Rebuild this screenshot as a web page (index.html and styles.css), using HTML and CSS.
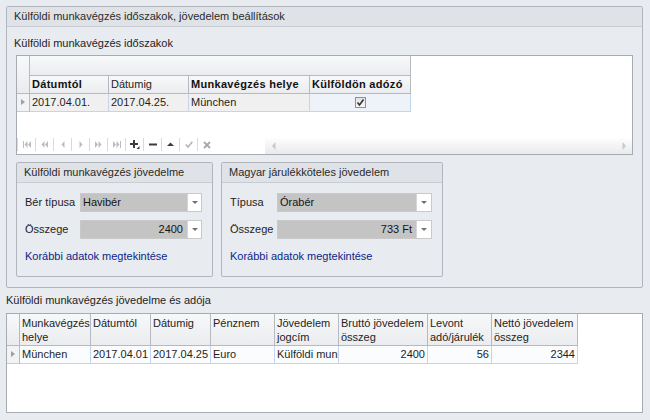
FILE: index.html
```html
<!DOCTYPE html>
<html>
<head>
<meta charset="utf-8">
<title>Külföldi munkavégzés</title>
<link rel="stylesheet" href="styles.css">
</head>
<body>
<div class="group main">
  <div class="ghead">Külföldi munkavégzés időszakok, jövedelem beállítások</div>
  <div class="mbody">
    <div class="caption">Külföldi munkavégzés időszakok</div>
    <div class="grid g1">
      <div class="t1">
        <div class="ind ind-head"></div>
        <div class="band"></div>
        <div class="h b">Dátumtól</div>
        <div class="h">Dátumig</div>
        <div class="h b">Munkavégzés helye</div>
        <div class="h b">Külföldön adózó</div>
        <div class="ind ind-row"><span class="tri"></span></div>
        <div class="d foc">2017.04.01.</div>
        <div class="d foc">2017.04.25.</div>
        <div class="d foc">München</div>
        <div class="d sel ctr"><span class="chk"><svg width="9" height="9" viewBox="0 0 9 9"><path d="M1.5 4.5 L3.5 7 L7.5 1.5" fill="none" stroke="#333" stroke-width="1.6"/></svg></span></div>
      </div>
      <div class="spacer"></div>
      <div class="bottombar">
        <div class="nav">
          <span class="nb"><svg width="8" height="7" viewBox="0 0 8 7"><rect x="0" y="0" width="1" height="7" fill="#b9bdc3"/><path d="M4.5 0 L1.5 3.5 L4.5 7Z M8 0 L5 3.5 L8 7Z" fill="#b9bdc3"/></svg></span>
          <span class="nb"><svg width="7" height="7" viewBox="0 0 7 7"><path d="M3.5 0 L0.5 3.5 L3.5 7Z M7 0 L4 3.5 L7 7Z" fill="#b9bdc3"/></svg></span>
          <span class="nb"><svg width="4" height="7" viewBox="0 0 4 7"><path d="M3.5 0 L0.5 3.5 L3.5 7Z" fill="#b9bdc3"/></svg></span>
          <span class="nb"><svg width="4" height="7" viewBox="0 0 4 7"><path d="M0.5 0 L3.5 3.5 L0.5 7Z" fill="#b9bdc3"/></svg></span>
          <span class="nb"><svg width="7" height="7" viewBox="0 0 7 7"><path d="M0 0 L3 3.5 L0 7Z M3.5 0 L6.5 3.5 L3.5 7Z" fill="#b9bdc3"/></svg></span>
          <span class="nb"><svg width="8" height="7" viewBox="0 0 8 7"><path d="M0 0 L3 3.5 L0 7Z M3.5 0 L6.5 3.5 L3.5 7Z" fill="#b9bdc3"/><rect x="7" y="0" width="1" height="7" fill="#b9bdc3"/></svg></span>
          <span class="nb"><svg width="10" height="9" viewBox="0 0 10 9"><path d="M3 0 H5 V3 H8 V5 H5 V8 H3 V5 H0 V3 H3Z" fill="#3a3c40"/><path d="M9.5 6 V9 H6.5Z" fill="#3a3c40"/></svg></span>
          <span class="nb"><svg width="8" height="7" viewBox="0 0 8 7"><rect x="0" y="2.5" width="8" height="2" fill="#3a3c40"/></svg></span>
          <span class="nb"><svg width="7" height="7" viewBox="0 0 7 7"><path d="M0 5 L3.5 1.5 L7 5Z" fill="#3a3c40"/></svg></span>
          <span class="nb"><svg width="8" height="7" viewBox="0 0 8 7"><path d="M0.8 3.5 L3 6 L7.3 0.8" fill="none" stroke="#b3b6bb" stroke-width="1.7"/></svg></span>
          <span class="nb"><svg width="8" height="8" viewBox="0 0 8 8"><path d="M1 1 L7 7 M7 1 L1 7" fill="none" stroke="#a4a7ac" stroke-width="1.8"/></svg></span>
        </div>
        <div class="hscroll">
          <svg width="4" height="8" viewBox="0 0 4 8"><path d="M3.5 0 L0 4 L3.5 8Z" fill="#c6c9cd"/></svg>
          <svg width="4" height="8" viewBox="0 0 4 8"><path d="M0.5 0 L4 4 L0.5 8Z" fill="#c6c9cd"/></svg>
        </div>
      </div>
    </div>

    <div class="boxes">
      <div class="group box box1">
        <div class="bhead">Külföldi munkavégzés jövedelme</div>
        <div class="bbody">
          <div class="frow">
            <span class="lbl l1">Bér típusa</span>
            <div class="combo"><span class="field">Havibér</span><span class="dd"><span class="ddtri"></span></span></div>
          </div>
          <div class="frow">
            <span class="lbl l1">Összege</span>
            <div class="combo"><span class="field num">2400</span><span class="dd"><span class="ddtri"></span></span></div>
          </div>
          <div class="link">Korábbi adatok megtekintése</div>
        </div>
      </div>
      <div class="group box box2">
        <div class="bhead">Magyar járulékköteles jövedelem</div>
        <div class="bbody">
          <div class="frow">
            <span class="lbl l2">Típusa</span>
            <div class="combo"><span class="field">Órabér</span><span class="dd"><span class="ddtri"></span></span></div>
          </div>
          <div class="frow">
            <span class="lbl l2">Összege</span>
            <div class="combo"><span class="field num">733 Ft</span><span class="dd"><span class="ddtri"></span></span></div>
          </div>
          <div class="link">Korábbi adatok megtekintése</div>
        </div>
      </div>
    </div>
  </div>
</div>

<div class="caption2">Külföldi munkavégzés jövedelme és adója</div>
<div class="grid g2">
  <div class="t2">
    <div class="ind ind-head2"></div>
    <div class="h2">Munkavégzés helye</div>
    <div class="h2">Dátumtól</div>
    <div class="h2">Dátumig</div>
    <div class="h2">Pénznem</div>
    <div class="h2">Jövedelem jogcím</div>
    <div class="h2">Bruttó jövedelem összeg</div>
    <div class="h2">Levont adó/járulék</div>
    <div class="h2">Nettó jövedelem összeg</div>
    <div class="ind ind-row"><span class="tri"></span></div>
    <div class="d2">München</div>
    <div class="d2">2017.04.01</div>
    <div class="d2">2017.04.25</div>
    <div class="d2">Euro</div>
    <div class="d2 clip">Külföldi munkavégzés</div>
    <div class="d2 r">2400</div>
    <div class="d2 r">56</div>
    <div class="d2 r">2344</div>
  </div>
</div>
</body>
</html>
```
FILE: styles.css
```css
* { box-sizing: border-box; }

body {
  margin: 0;
  width: 650px;
  height: 420px;
  overflow: hidden;
  background: #e8ebf0;
  font: 11px/13px "Liberation Sans", Arial, sans-serif;
  color: #1e1e1e;
}

.group {
  border: 1px solid #b2b6bc;
  border-radius: 2px;
}

.main {
  margin: 6px 0 0 6px;
  width: 637px;
  height: 282px;
}

.ghead {
  height: 20px;
  border-bottom: 1px solid #c9ccd1;
  background: #dfe2e6;
  padding-left: 7px;
  line-height: 19px;
  color: #2a2a2a;
}

.caption {
  margin-top: 10px;
  padding-left: 7px;
}

.grid {
  background: #fff;
  border: 1px solid #a7acb3;
}

.g1 {
  margin: 5px 0 0 9px;
  width: 617px;
  height: 100px;
  display: flex;
  flex-direction: column;
}

.t1 {
  display: grid;
  grid-template-columns: 13px 79px 80px 121px 101px;
  grid-template-rows: 20px 18px 18px;
}

.ind-head {
  grid-row: 1 / 3;
  background: linear-gradient(#f8f9fa, #e9ebee);
  border-right: 1px solid #b6bac0;
  border-bottom: 1px solid #b6bac0;
}

.band {
  grid-column: 2 / 6;
  background: linear-gradient(#f8f9fa, #eaecef);
  border-right: 1px solid #b6bac0;
  border-bottom: 1px solid #b6bac0;
}

.h {
  background: linear-gradient(#f7f8f9, #eaecef);
  border-right: 1px solid #b6bac0;
  border-bottom: 1px solid #b6bac0;
  padding-left: 2px;
  line-height: 17px;
  white-space: nowrap;
  overflow: hidden;
}

.b {
  font-weight: bold;
  color: #111;
  letter-spacing: 0.3px;
}

.ind-row {
  background: #f2f3f5;
  border-right: 1px solid #b6bac0;
  border-bottom: 1px solid #c9cdd3;
  position: relative;
}

.tri {
  position: absolute;
  left: 4px;
  top: 5px;
  width: 0;
  height: 0;
  border-left: 4px solid #9aa0a8;
  border-top: 3.5px solid transparent;
  border-bottom: 3.5px solid transparent;
}

.d {
  border-right: 1px solid #c3d4ec;
  border-bottom: 1px solid #c3d4ec;
  padding-left: 2px;
  line-height: 17px;
  white-space: nowrap;
}

.foc { background: #f0f0f0; }
.sel { background: #eef3fa; }

.ctr {
  display: flex;
  align-items: center;
  justify-content: center;
  padding-left: 0;
}

.chk {
  width: 11px;
  height: 11px;
  border: 1px solid #8e9196;
  background: linear-gradient(#e2e3e5, #f7f7f8);
  display: flex;
  align-items: center;
  justify-content: center;
}

.spacer { flex: 1; }

.bottombar {
  height: 17px;
  display: flex;
}

.nav {
  display: flex;
  width: 198px;
}

.nb {
  width: 18px;
  height: 13px;
  margin-top: 1px;
  border-left: 1px solid #d7dade;
  display: flex;
  align-items: center;
  justify-content: center;
}

.hscroll {
  flex: 1;
  margin-left: 50px;
  background: linear-gradient(#ffffff, #f4f4f5 50%, #e9eaec);
  display: flex;
  align-items: center;
  justify-content: space-between;
  padding: 0 6px 0 7px;
}

.boxes {
  display: flex;
  gap: 8px;
  margin: 7px 0 0 9px;
}

.box { height: 115px; }
.box1 { width: 197px; }
.box2 { width: 222px; }

.bhead {
  height: 20px;
  border-bottom: 1px solid #c9ccd1;
  background: #dfe2e6;
  padding-left: 7px;
  line-height: 19px;
  color: #2a2a2a;
}

.bbody {
  padding: 10px 10px 0 8px;
}

.frow {
  display: flex;
  align-items: center;
  height: 19px;
}

.frow + .frow { margin-top: 8px; }

.lbl { flex: none; }
.l1 { width: 55px; }
.l2 { width: 47px; }

.combo {
  flex: 1;
  height: 19px;
  display: flex;
  border: 1px solid #c9c9c9;
}

.field {
  flex: 1;
  background: #c4c4c4;
  padding: 0 4px 0 2px;
  line-height: 17px;
  color: #141414;
}

.num { text-align: right; }

.dd {
  width: 14px;
  background: #fff;
  border-left: 1px solid #d6d6d6;
  display: flex;
  align-items: center;
  justify-content: center;
}

.box2 .dd { width: 15px; }

.ddtri {
  width: 0;
  height: 0;
  border-top: 3px solid #6f7275;
  border-left: 3px solid transparent;
  border-right: 3px solid transparent;
}

.link {
  margin-top: 11px;
  color: #0c1f8a;
}

.caption2 {
  margin: 6px 0 0 6px;
}

.g2 {
  margin: 6px 0 0 6px;
  width: 637px;
  height: 100px;
}

.t2 {
  display: grid;
  grid-template-columns: 13px 71px 60px 60px 64px 64px 89px 64px 86px;
  grid-template-rows: 32px 18px;
}

.ind-head2 {
  background: linear-gradient(#f8f9fa, #e9ebee);
  border-right: 1px solid #b6bac0;
  border-bottom: 1px solid #b6bac0;
}

.h2 {
  background: linear-gradient(#f7f8f9, #eaecef);
  border-right: 1px solid #b6bac0;
  border-bottom: 1px solid #b6bac0;
  padding: 3px 2px 0 2px;
  line-height: 13.5px;
  overflow: hidden;
}

.d2 {
  border-right: 1px solid #c3d4ec;
  border-bottom: 1px solid #c3d4ec;
  padding: 0 2px;
  line-height: 17px;
  white-space: nowrap;
  overflow: hidden;
  background: #fbfcfe;
}

.r { text-align: right; }
.clip { text-overflow: clip; }
```
